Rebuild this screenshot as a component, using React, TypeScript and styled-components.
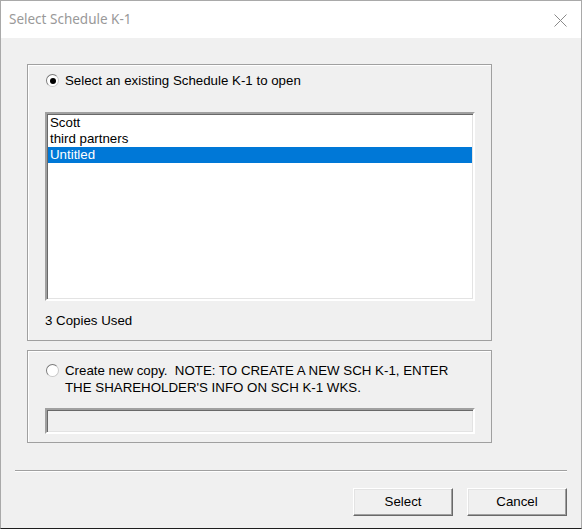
import React from 'react'
import styled, { createGlobalStyle } from 'styled-components'

const GlobalStyle = createGlobalStyle`
  html, body {
    margin: 0;
    padding: 0;
    background: #f0f0f0;
  }
  * {
    box-sizing: border-box;
  }
`

const items = ['Scott', 'third partners', 'Untitled']

export default function App() {
  return (
    <>
      <GlobalStyle />
      <Window>
        <TitleBar>
          <Title>Select Schedule K-1</Title>
          <CloseButton aria-label="Close">
            <svg width="13" height="13" viewBox="0 0 13 13">
              <path d="M0.5 0.5 L12.5 12.5 M12.5 0.5 L0.5 12.5" stroke="#8a8a8a" strokeWidth="1" fill="none" />
            </svg>
          </CloseButton>
        </TitleBar>
        <Body>
          <GroupBox $height={277}>
            <RadioRow $top={7}>
              <Radio $checked />
              <Label>Select an existing Schedule K-1 to open</Label>
            </RadioRow>
            <ListBox>
              {items.map((item) => (
                <ListItem key={item} $selected={item === 'Untitled'}>
                  {item}
                </ListItem>
              ))}
            </ListBox>
            <Count>3 Copies Used</Count>
          </GroupBox>
          <GroupBox $height={93} $top={9}>
            <RadioRow $top={11}>
              <Radio />
              <Label>
                Create new copy.&nbsp; NOTE: TO CREATE A NEW SCH K-1, ENTER
                <br />
                THE SHAREHOLDER'S INFO ON SCH K-1 WKS.
              </Label>
            </RadioRow>
            <TextField disabled />
          </GroupBox>
          <Separator />
          <ButtonRow>
            <Button type="button">Select</Button>
            <Button type="button">Cancel</Button>
          </ButtonRow>
        </Body>
      </Window>
    </>
  )
}

const Window = styled.div`
  width: 582px;
  height: 529px;
  display: flex;
  flex-direction: column;
  border: 1px solid #a9a9a9;
  border-bottom: 1px solid #1e1e1e;
  background: #f0f0f0;
  font-family: 'Liberation Sans', Arial, sans-serif;
  font-size: 13.3px;
  color: #000;
`

const TitleBar = styled.div`
  height: 37px;
  flex: none;
  background: #fff;
  display: flex;
  align-items: center;
  justify-content: space-between;
  padding: 0 14px 0 8px;
`

const Title = styled.span`
  font-family: 'Noto Sans', 'Open Sans', sans-serif;
  font-size: 13.5px;
  color: #999;
  margin-top: -1px;
`

const CloseButton = styled.span`
  width: 13px;
  height: 13px;
  display: flex;
  margin-top: 1px;
`

const Body = styled.div`
  flex: 1;
  display: flex;
  flex-direction: column;
  padding: 26px 14px 0 26px;
`

const GroupBox = styled.div<{ $height: number; $top?: number }>`
  width: 465px;
  height: ${({ $height }) => $height}px;
  margin-top: ${({ $top }) => $top ?? 0}px;
  border: 1px solid #a0a0a0;
  box-shadow: inset 1px 1px 0 #fff;
  padding: 0 0 0 17px;
  display: flex;
  flex-direction: column;
`

const RadioRow = styled.div<{ $top?: number }>`
  display: flex;
  align-items: flex-start;
  margin-top: ${({ $top }) => $top ?? 9}px;
  padding-left: 1px;
  line-height: 17px;
`

const Radio = styled.span<{ $checked?: boolean }>`
  width: 13px;
  height: 13px;
  flex: none;
  margin-top: 2px;
  margin-right: 6px;
  border-radius: 50%;
  border: 1px solid #7a7a7a;
  border-right-color: #c8c8c8;
  border-bottom-color: #c8c8c8;
  background: #fff;
  position: relative;

  &::after {
    content: '';
    display: ${({ $checked }) => ($checked ? 'block' : 'none')};
    position: absolute;
    left: 2.5px;
    top: 2.5px;
    width: 6px;
    height: 6px;
    border-radius: 50%;
    background: #000;
  }
`

const Label = styled.span`
  white-space: nowrap;
`

const ListBox = styled.div`
  width: 430px;
  height: 189px;
  margin-top: 23px;
  background: #fff;
  border-style: solid;
  border-width: 2px;
  border-color: #a0a0a0 #fff #fff #a0a0a0;
  box-shadow: inset 1px 1px 0 #696969, inset -1px -1px 0 #e3e3e3;
  padding: 1px 1px;
`

const ListItem = styled.div<{ $selected?: boolean }>`
  height: 16px;
  line-height: 16px;
  padding-left: 2px;
  background: ${({ $selected }) => ($selected ? '#0078d7' : 'transparent')};
  color: ${({ $selected }) => ($selected ? '#fff' : '#000')};
`

const Count = styled.div`
  margin-top: 12px;
  line-height: 16px;
`

const TextField = styled.input`
  width: 430px;
  height: 26px;
  margin-top: 12px;
  background: #f0f0f0;
  border-style: solid;
  border-width: 2px;
  border-color: #a0a0a0 #fff #fff #a0a0a0;
  box-shadow: inset 1px 1px 0 #696969, inset -1px -1px 0 #e3e3e3;
  outline: none;
`

const Separator = styled.div`
  width: 552px;
  height: 2px;
  margin: 27px 0 0 -12px;
  border-top: 1px solid #a0a0a0;
  border-bottom: 1px solid #fff;
`

const ButtonRow = styled.div`
  display: flex;
  justify-content: flex-end;
  gap: 14px;
  margin-top: 16px;
`

const Button = styled.button`
  width: 100px;
  height: 28px;
  padding: 0 0 1px;
  background: #f0f0f0;
  font-family: 'Liberation Sans', Arial, sans-serif;
  font-size: 13.3px;
  color: #000;
  border-style: solid;
  border-width: 1px;
  border-color: #fff #696969 #696969 #fff;
  box-shadow: inset -1px -1px 0 #a0a0a0, inset 1px 1px 0 #e3e3e3;
`
